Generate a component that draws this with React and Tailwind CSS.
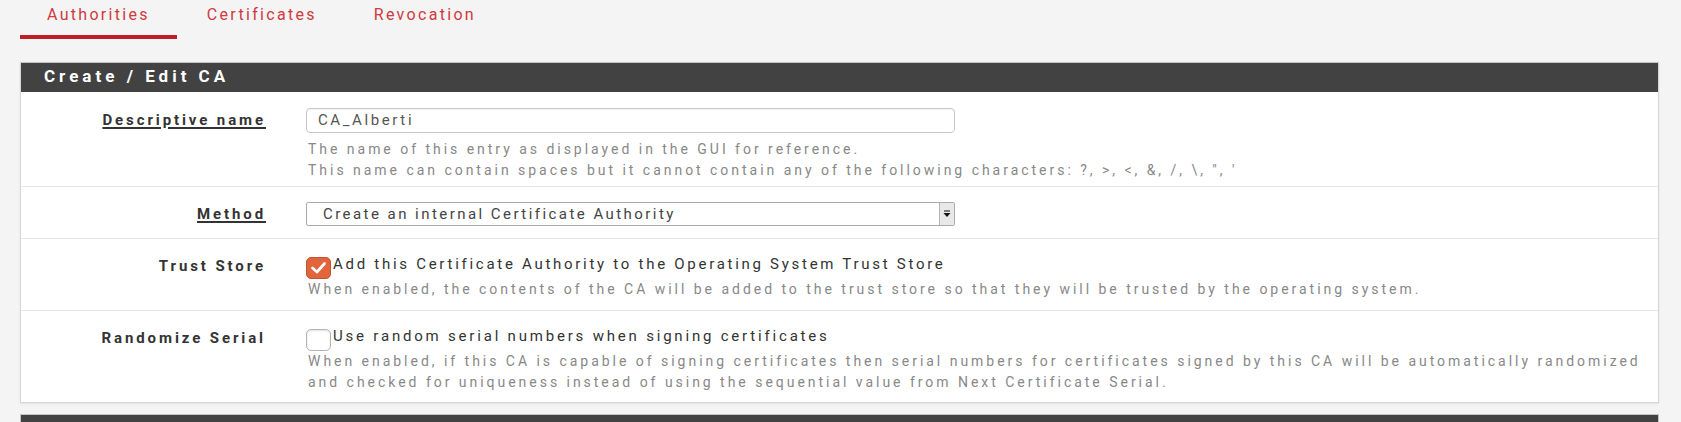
import React from "react";

function Tab({ label, active }) {
  return (
    <div
      className={
        "px-[27px] pt-[5px] pb-[10px] border-b-4 text-[16px] leading-[20px] tracking-[2.3px] text-[#cf3a40] " +
        (active ? "border-[#bd1f26]" : "border-transparent")
      }
    >
      {label}
    </div>
  );
}

function Checkbox({ checked }) {
  if (checked) {
    return (
      <div className="mt-[3px] mr-[2px] w-[25px] h-[22px] shrink-0 rounded-[5px] bg-[#e0643c] border border-[#c4532f] flex items-center justify-center">
        <svg width="17" height="14" viewBox="0 0 17 14" fill="none">
          <path d="M2.5 7 L7 11 L14.5 2.5" stroke="#ffffff" strokeWidth="2.7" strokeLinecap="round" strokeLinejoin="round" />
        </svg>
      </div>
    );
  }
  return (
    <div className="mt-[3px] mr-[2px] w-[25px] h-[22px] shrink-0 rounded-[5px] bg-white border border-[#b3b3b3] shadow-[inset_0_1px_2px_rgba(0,0,0,0.12)]" />
  );
}

function Row({ label, underline, children, className }) {
  return (
    <div className={"flex " + className}>
      <div className="w-[245px] shrink-0 text-right">
        <span
          className={
            "text-[15px] leading-[21px] font-bold tracking-[2.9px] text-[#333333] " +
            (underline ? "underline decoration-[1.5px] underline-offset-[2px]" : "")
          }
        >
          {label}
        </span>
      </div>
      <div className="ml-[40px] flex-1 min-w-0">{children}</div>
    </div>
  );
}

function Help({ children, className }) {
  return (
    <div className={"pl-[2px] text-[14px] leading-[21px] tracking-[2.97px] text-[#888888] whitespace-nowrap " + (className || "")}>
      {children}
    </div>
  );
}

export default function App() {
  return (
    <div className="h-[422px] overflow-hidden bg-[#f4f4f4] pl-[20px] pr-[22px] font-[family-name:Roboto,sans-serif]">
      <nav className="flex gap-[3px]">
        <Tab label="Authorities" active />
        <Tab label="Certificates" />
        <Tab label="Revocation" />
      </nav>

      <div className="mt-[23px] bg-white border border-[#d6d6d6] border-t-[#c4c4c4] shadow-[0_1px_2px_rgba(0,0,0,0.08)]">
        <div className="h-[29px] bg-[#424242] pl-[23px] pb-[2px] text-[17px] leading-[27px] font-bold tracking-[4px] text-white">
          Create / Edit CA
        </div>

        <Row label="Descriptive name" underline className="pt-[16px] pb-[5px]">
          <div className="w-[649px] h-[25px] border border-[#c8c8c8] rounded-[4px] px-[11px] flex items-center text-[15px] tracking-[2.6px] text-[#555555] shadow-[inset_0_1px_1px_rgba(0,0,0,0.06)]">
            CA_Alberti
          </div>
          <Help className="mt-[6px]">
            The name of this entry as displayed in the GUI for reference.
            <br />
            This name can contain spaces but it cannot contain any of the following characters: ?, &gt;, &lt;, &amp;, /, \, ", '
          </Help>
        </Row>

        <Row label="Method" underline className="border-t border-[#e6e6e6] pt-[15px] pb-[12px]">
          <div className="w-[649px] h-[24px] border border-[#aaaaaa] rounded-[2px] flex items-stretch text-[15px] tracking-[2.45px] text-[#444444]">
            <div className="flex-1 pl-[16px] flex items-center">Create an internal Certificate Authority</div>
            <div className="w-[15px] bg-[#e8e8e8] border-l border-[#b5b5b5] flex items-center justify-center">
              <svg width="8" height="8" viewBox="0 0 8 8">
                <rect x="1" y="0.5" width="6" height="1" fill="#111" />
                <path d="M0.5 3 L7.5 3 L4 7 Z" fill="#111" />
              </svg>
            </div>
          </div>
        </Row>

        <Row label="Trust Store" className="border-t border-[#e6e6e6] pt-[15px] pb-[10px]">
          <div className="flex items-start">
            <Checkbox checked />
            <span className="text-[15px] leading-[21px] tracking-[2.72px] text-[#333333] whitespace-nowrap">
              Add this Certificate Authority to the Operating System Trust Store
            </span>
          </div>
          <Help className="mt-[0px]">
            When enabled, the contents of the CA will be added to the trust store so that they will be trusted by the operating system.
          </Help>
        </Row>

        <Row label="Randomize Serial" className="border-t border-[#e6e6e6] pt-[15px] pb-[9px]">
          <div className="flex items-start">
            <Checkbox />
            <span className="text-[15px] leading-[21px] tracking-[2.8px] text-[#333333] whitespace-nowrap">
              Use random serial numbers when signing certificates
            </span>
          </div>
          <Help className="mt-[0px]">
            When enabled, if this CA is capable of signing certificates then serial numbers for certificates signed by this CA will be automatically randomized
            <br />
            and checked for uniqueness instead of using the sequential value from Next Certificate Serial.
          </Help>
        </Row>
      </div>

      <div className="mt-[11px] h-[30px] bg-[#424242] border border-[#c4c4c4]" />
    </div>
  );
}
